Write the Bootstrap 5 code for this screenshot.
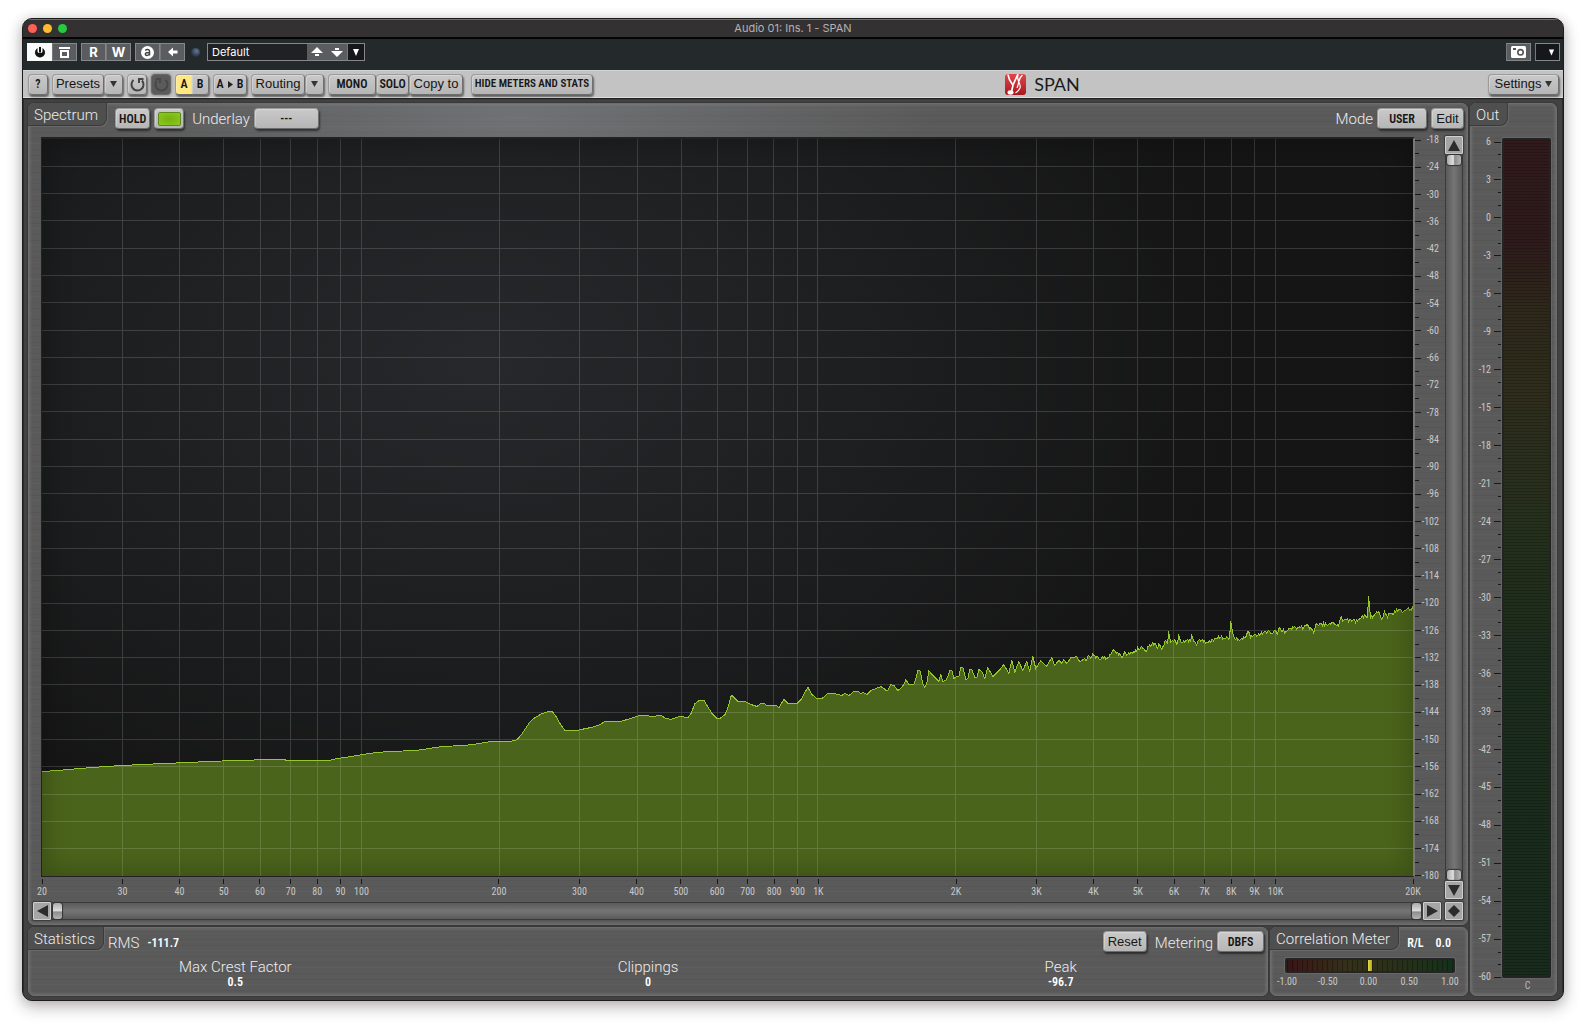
<!DOCTYPE html>
<html lang="en">
<head>
<meta charset="utf-8">
<meta name="viewport" content="width=device-width, initial-scale=1">
<title>Audio 01: Ins. 1 - SPAN</title>
<link href="https://cdn.jsdelivr.net/npm/bootstrap@5.3.0/dist/css/bootstrap.min.css" rel="stylesheet">
<style>
:root{--sans:"Liberation Sans",Arial,sans-serif;--narrow:"Roboto Condensed","Roboto",sans-serif;--light:"Roboto","Liberation Sans",sans-serif}
body{background:#fff;font-family:var(--sans);padding:18px 22px 26px;color:#e2e2e2}
svg{display:block}
.host-window{border:1px solid #1c1c1c;border-radius:10px;overflow:hidden;background:#3f3f3f;box-shadow:0 6px 16px rgba(40,25,35,.3),0 0 12px rgba(0,0,0,.12)}
.title-strip{height:20px;background:#343132;border-bottom:2px solid #050505;border-top:1px solid #6f7070;font:11px/17px "Inter",sans-serif;color:#b4b2b2}
.lights{left:5px;top:4px;gap:6px}
.lights span{width:9px;height:9px;border-radius:50%}
.l-red{background:#ff5f57}.l-amber{background:#febc2e}.l-green{background:#28c840}
.host-bar{height:31px;background:#24292c;padding:4px 3px 9px 4px}
.hbtn{width:25px;height:18px;padding:0;border:1px solid #85878a;border-radius:0;background:#5a5c60;color:#fff;font:bold 13px/16px "Inter",sans-serif;display:flex;align-items:center;justify-content:center}
.hbtn + .hbtn{border-left-color:#76787b}
.hbtn.lit{background:#fafafa;border-color:#fafafa}
.hbtn.dark{background:#15171a}
.hbtn.plain{width:20px;border-left:0;border-right:0}
.hbtn.slim{width:18px}
.hled{width:9px;height:9px;border-radius:50%;background:radial-gradient(circle at 60% 35%,#5f7896,#232d3a 75%);margin:0 7px 0 6px}
.preset-select{appearance:none;width:100px;height:18px;background:#1f2123;border:1px solid #85878a;border-right:0;border-radius:0;color:#fff;font:11px/16px "Inter",sans-serif;padding:0 4px}
.plug-bar{height:28px;background:#c3c3c3;border-top:1px solid #d4d4d4;border-bottom:1px solid #dedede;padding:3px 4px 3px 5px;box-shadow:0 1px 1px #222;position:relative;gap:4px}
.pbtn{height:21px;padding:0;border:1px solid #8a8a8a;border-color:#9b9b9b #707070 #6c6c6c #9b9b9b;border-radius:4px;background:linear-gradient(#c9c9c9,#b6b6b6);box-shadow:1px 2px 2px rgba(0,0,0,.5),inset 1px 1px 0 rgba(255,255,255,.25);color:#161616;font:13px/18px var(--sans);white-space:nowrap;display:flex;align-items:center;justify-content:center;flex:none}
.pbtn.cap{font:600 12px/18px var(--narrow)}
.pbtn.cap.long{font:600 11px/18px var(--narrow)}
.pbtn:hover{background:#d5d5d5;color:#111}
.w17{width:17px}.w19{width:19px}.w20{width:20px}.w21{width:21px}.w30{width:30px}.w33{width:33px}.w34{width:34px}.w35{width:35px}.w44{width:44px}.w47{width:47px}.w48{width:48px}.w50{width:50px}.w52{width:52px}.w54{width:54px}.w65{width:65px}.w71{width:71px}.w122{width:122px}
.pbtn.sunk{background:#5b5b5b;border-color:#6a6a6a;box-shadow:0 0 3px #666}
.pbtn.yellow{background:#ffe784}
.brand-name{font:18px/20px "Lato",sans-serif;color:#1b1b1b}
.plug-body{padding:5px 5px 4px 4px;gap:2px;background:#424242;border-left:1px solid #2e2e2e;border-right:1px solid #2e2e2e}
.stack{gap:2px}
.panel{border:1px solid #6d6d6d;border-radius:6px;box-shadow:inset 0 0 3px 1px rgba(255,255,255,.14),0 0 1px 1px #3a3a3a;background:
 repeating-linear-gradient(rgba(0,0,0,.05) 0 1px,transparent 1px 5px,rgba(255,255,255,.025) 5px 6px,transparent 6px 11px,rgba(0,0,0,.04) 11px 12px,transparent 12px 17px),#5a5a5a}
.panel.main-panel{background:
 radial-gradient(ellipse 420px 90px at 34% 14px,rgba(170,176,186,.28),transparent),
 repeating-linear-gradient(rgba(0,0,0,.05) 0 1px,transparent 1px 5px,rgba(255,255,255,.025) 5px 6px,transparent 6px 11px,rgba(0,0,0,.04) 11px 12px,transparent 12px 17px),#5a5a5a}
.ptab{height:23px;margin:-1px 0 0 -1px;padding:1px 8px 0 6px;background:#4f4f4f;border-right:1px solid #3b3b3b;border-bottom:1px solid #3b3b3b;border-radius:6px 0 8px 0;box-shadow:1px 1px 0 #686868;white-space:nowrap;align-self:flex-start}
.lite{font:300 15px/22px var(--light);color:#ececec}
.head{height:33px;padding-right:3px}
.head .pbtn{margin-top:4px}
.head .lite:not(.ptab){margin-top:4px}
.led{width:23px;height:14px;border-radius:2px;border:1px solid #5f8a16;background:radial-gradient(#76b10d,#8cc924)}
.plot-area{padding:0 4px 0 12px}
.plot{border:1px solid #222;border-top:2px solid #222;border-right:2px solid #777;border-bottom:1px solid #222;background:radial-gradient(ellipse 55% 70% at 32% 30%,#26282b,#1b1c1d 65%,#151515)}
.plot svg{position:absolute;inset:0;width:100%;height:100%}
.plot::after{content:"";position:absolute;inset:0;box-shadow:inset 0 0 26px 4px rgba(0,0,0,.22)}
.xaxis{height:22px;margin:0 2px 0 1px;position:relative}
.xaxis div{position:absolute;top:2px;width:40px;margin-left:-20px;text-align:center;font:10px/12px var(--narrow);color:#c8c8c8}
.xaxis div::before{content:"";display:block;width:1px;height:5px;background:#181818;margin:0 auto 2px}
.yaxis,.maxis{display:flex;flex-direction:column;justify-content:space-between;font:10px/12px var(--narrow);color:#c8c8c8}
.yaxis{width:24px;margin:3px 6px 23px 0}
.tick{height:0;display:flex;align-items:center;justify-content:space-between}
.tick::before{content:"";width:6px;height:1px;background:#181818}
.tick.minor::before{width:4px}
.vbar{width:18px;gap:1px;margin-top:-1px}
.track{background:linear-gradient(90deg,#5a5a5a,#757575 50%,#5a5a5a);border:1px solid #3a3a3a;border-width:0 1px}
.hbar .track{background:linear-gradient(#5a5a5a,#757575 50%,#5a5a5a);border-width:1px 0}
.grip{flex:none;height:10px;margin:0 1px;border-radius:3px;background:linear-gradient(90deg,#aaa,#e0e0e0 45%,#8c8c8c 55%,#b5b5b5);box-shadow:0 0 1px 1px #333}
.hbar .grip{height:16px;width:9px;margin:1px 1px;background:linear-gradient(#aaa,#e0e0e0 50%,#8c8c8c 55%,#b5b5b5)}
.abtn{flex:none;width:18px;height:18px;padding:0;border:1px solid #d0d0d0;border-radius:1px;background:#a5a5a5;box-shadow:0 0 1px 1px #3c3c3c;display:flex;align-items:center;justify-content:center}
.hbar{height:18px;margin:3px 4px 4px 4px;gap:1px}
.hbar .abtn:last-child{margin-left:3px}
.low{height:69px;gap:2px}
.cap-val{font:600 12px/14px var(--narrow);color:#fff}
.low .pbtn{margin-top:3px}
.stat-head{padding-right:3px}
.stat{margin-top:6px}
.stat .lite{line-height:15px}
.corr{width:198px}
.corr-meter{height:15px;margin:8px 12px 0 14px;border:2px solid #242424;border-radius:2px;box-shadow:0 0 1px 1px #6a6a6a;background:repeating-linear-gradient(90deg,rgba(0,0,0,.3) 0 1px,transparent 1px 5px),linear-gradient(90deg,#3a1416,#35301a 35%,#2d3019 60%,#16301b)}
.corr-meter i{width:4px;height:11px;background:linear-gradient(90deg,#e6dc4a,#b3a81c)}
.corr-scale{font:10px/14px var(--narrow);color:#c8c8c8;margin:2px 2px 0 1px}
.corr-scale span{width:30px;text-align:center}
.out-panel{width:87px}
.maxis{width:28px;margin:4px 0 0 3px;height:calc(100% - 4px)}
.maxis .tick{justify-content:flex-end;gap:3px}
.maxis .tick::before{order:2;width:8px}
.maxis .tick.minor::before{width:4px}
.meter{width:49px;border:2px solid #232323;border-radius:2px;box-shadow:0 0 1px 1px #666;background:repeating-linear-gradient(rgba(0,0,0,.2) 0 1px,transparent 1px 3px),linear-gradient(#311a1c,#2e1a1b 12%,#2e281b 20%,#2f2d1c 30%,#26301c 45%,#1c2c1c 62%,#182b1c)}
.mrow{margin:12px 5px 0 0}
.mfoot{font:10px/12px var(--narrow);color:#bbb;height:17px;padding:2px 5px 0 33px}
</style>
<script src="https://cdn.jsdelivr.net/npm/bootstrap@5.3.0/dist/js/bootstrap.bundle.min.js"></script>
</head>
<body class="d-flex flex-column min-vh-100">
<main class="host-window d-flex flex-column flex-grow-1">
  <header class="title-strip position-relative text-center flex-shrink-0">
    <div class="lights position-absolute d-flex"><span class="l-red"></span><span class="l-amber"></span><span class="l-green"></span></div>
    Audio 01: Ins. 1 - SPAN
  </header>

  <nav class="host-bar d-flex align-items-center flex-shrink-0" aria-label="Host controls">
    <div class="d-flex me-1">
      <button class="hbtn lit" aria-label="Bypass"><svg width="12" height="12" viewBox="0 0 12 12"><circle cx="6" cy="6.500" r="5" fill="#111"/><path d="M3.500 0h5v5.500a2.500 1.500 0 0 1-5 0z" fill="#fafafa"/><path d="M5 1h2v5.500H5z" fill="#111"/></svg></button>
      <button class="hbtn" aria-label="Output"><svg width="13" height="13" viewBox="0 0 13 13" fill="none" stroke="#fff" stroke-width="2"><path d="M1 2h11"/><rect x="3" y="5" width="7" height="6"/></svg></button>
    </div>
    <div class="d-flex me-1"><button class="hbtn">R</button><button class="hbtn">W</button></div>
    <div class="d-flex">
      <button class="hbtn" aria-label="Automation"><svg width="13" height="13" viewBox="0 0 13 13"><circle cx="6.500" cy="6.500" r="6.500" fill="#fff"/><path d="M4.300 4.400C5.200 3.400 8.500 3 8.500 5.300V9.500M8.500 6.400C6 6.300 4.200 6.700 4.300 8.200 4.500 9.900 7.500 9.800 8.500 8" fill="none" stroke="#444" stroke-width="1.500"/></svg></button>
      <button class="hbtn" aria-label="Back"><svg width="10" height="10" viewBox="0 0 10 10" fill="#fff"><path d="M0 5 5 .5V3.500h4.500v3H5v3z"/></svg></button>
    </div>
    <span class="hled"></span>
    <select class="preset-select" aria-label="Preset"><option>Default</option></select>
    <button class="hbtn plain" aria-label="Previous"><svg width="12" height="12" viewBox="0 0 12 12" fill="#fff"><path d="M0 7 6 1l6 6zM4 8h4v2H4z"/></svg></button>
    <button class="hbtn plain" aria-label="Next"><svg width="12" height="12" viewBox="0 0 12 12" fill="#fff"><path d="M0 5h12L6 11zM4 2h4v2H4z"/></svg></button>
    <button class="hbtn dark slim" aria-label="Preset list"><svg width="8" height="7" viewBox="0 0 8 7" fill="#fff"><path d="M1 0h6L4 7z"/></svg></button>
    <button class="hbtn ms-auto me-1" aria-label="Snapshot"><svg width="15" height="12" viewBox="0 0 15 12"><rect width="15" height="12" rx="1.500" fill="#fff"/><circle cx="9.500" cy="6.300" r="2.700" fill="none" stroke="#555" stroke-width="1.600"/><path d="M2 3h3" stroke="#555" stroke-width="2"/></svg></button>
    <button class="hbtn dark" aria-label="Menu"><svg class="ms-2" width="7" height="7" viewBox="0 0 8 7" fill="#fff"><path d="M1 0h6L4 7z"/></svg></button>
  </nav>

  <nav class="plug-bar d-flex align-items-center flex-shrink-0" aria-label="Plugin toolbar">
    <button class="pbtn cap w20">?</button>
    <div class="d-flex"><button class="pbtn w52">Presets</button><button class="pbtn w19" aria-label="Preset menu"><svg width="7" height="6" viewBox="0 0 8 7" fill="#333"><path d="M0 0h8L4 7z"/></svg></button></div>
    <button class="pbtn w20" aria-label="Undo"><svg width="15" height="15" viewBox="0 0 15 15" fill="none" stroke="#444" stroke-width="2"><path d="M3.500 3a6 6 0 1 0 8.500.5"/><path d="M9 6V2h4.500"/></svg></button>
    <button class="pbtn sunk w20" aria-label="Redo"><svg width="15" height="15" viewBox="0 0 15 15" fill="none" stroke="#484848" stroke-width="2"><path d="M11.500 3a6 6 0 1 1-8.500.5"/><path d="M6 6V2H1.500"/></svg></button>
    <div class="d-flex"><button class="pbtn cap yellow w17 rounded-end-0 border-end-0">A</button><button class="pbtn cap w17 rounded-start-0 border-start-0">B</button></div>
    <button class="pbtn cap w34">A<svg class="mx-1" width="5" height="7" viewBox="0 0 5 7" fill="#222"><path d="M0 0v7l5-3.500z"/></svg>B</button>
    <div class="d-flex"><button class="pbtn w54">Routing</button><button class="pbtn w19" aria-label="Routing menu"><svg width="7" height="6" viewBox="0 0 8 7" fill="#333"><path d="M0 0h8L4 7z"/></svg></button></div>
    <div class="d-flex me-1"><button class="pbtn cap w48">MONO</button><button class="pbtn cap w33">SOLO</button><button class="pbtn w54">Copy to</button></div>
    <button class="pbtn cap long w122">HIDE METERS AND STATS</button>
    <div class="d-flex align-items-center flex-grow-1 justify-content-center ps-1">
      <svg width="21" height="21" viewBox="0 0 21 21"><defs><linearGradient id="red" x2="0" y2="1"><stop stop-color="#e0454b"/><stop offset="1" stop-color="#a8181e"/></linearGradient></defs><rect width="21" height="21" rx="3" fill="url(#red)"/><path d="M3 .5c.5 4 2 7 4.500 10M13 0 8 11 6.500 18" fill="none" stroke="#fff" stroke-width="1.700"/><ellipse cx="5.500" cy="18.500" rx="3" ry="2.200" fill="#fff"/><path d="M13 1c-2 6 3.500 8 2 13-.8 2-3 4-4.500 5M17.500 1c-5 4-3 8-5.500 13" fill="none" stroke="#fff" stroke-width="1.200"/></svg>
      <span class="brand-name ms-1 ps-1">SPAN</span>
    </div>
    <button class="pbtn w71">Settings<svg class="ms-1" width="7" height="6" viewBox="0 0 8 7" fill="#333"><path d="M0 0h8L4 7z"/></svg></button>
  </nav>

  <div class="plug-body d-flex flex-grow-1">
    <div class="stack d-flex flex-column flex-grow-1">
      <section class="panel main-panel d-flex flex-column flex-grow-1">
        <div class="head d-flex align-items-start">
          <h1 class="ptab lite mb-0 me-2">Spectrum</h1>
          <button class="pbtn cap w35 me-1">HOLD</button>
          <button class="pbtn w30 me-2" aria-label="Fill spectrum"><span class="led"></span></button>
          <label class="lite me-1" for="underlay">Underlay</label>
          <button id="underlay" class="pbtn cap w65">---</button>
          <label class="lite ms-auto me-1" for="mode">Mode</label>
          <button id="mode" class="pbtn cap w50 me-1">USER</button>
          <button class="pbtn w33">Edit</button>
        </div>
        <div class="plot-area d-flex flex-grow-1">
          <div class="d-flex flex-column flex-grow-1">
            <div class="plot position-relative flex-grow-1"><svg id="plot" viewBox="41 139 1372 737" preserveAspectRatio="none"></svg></div>
            <div class="xaxis" id="xaxis"></div>
          </div>
          <div class="yaxis" id="yaxis"></div>
          <div class="vbar d-flex flex-column">
            <button class="abtn" aria-label="Up"><svg width="12" height="11" viewBox="0 0 12 11" fill="#2c2c2c"><path d="M6 0l6 11H0z"/></svg></button>
            <div class="track d-flex flex-column flex-grow-1 justify-content-between"><span class="grip"></span><span class="grip"></span></div>
            <button class="abtn" aria-label="Down"><svg width="12" height="11" viewBox="0 0 12 11" fill="#2c2c2c"><path d="M6 11l6-11H0z"/></svg></button>
          </div>
        </div>
        <div class="hbar d-flex">
          <button class="abtn" aria-label="Left"><svg width="11" height="12" viewBox="0 0 11 12" fill="#2c2c2c"><path d="M0 6l11-6v12z"/></svg></button>
          <div class="track d-flex align-items-center flex-grow-1 justify-content-between"><span class="grip"></span><span class="grip"></span></div>
          <button class="abtn" aria-label="Right"><svg width="11" height="12" viewBox="0 0 11 12" fill="#2c2c2c"><path d="M11 6L0 0v12z"/></svg></button>
          <button class="abtn" aria-label="Reset zoom"><svg width="12" height="12" viewBox="0 0 12 12" fill="#2c2c2c"><path d="M6 0l6 6-6 6-6-6z"/></svg></button>
        </div>
      </section>

      <div class="low d-flex">
        <section class="panel d-flex flex-column flex-grow-1">
          <div class="stat-head d-flex align-items-start">
            <h2 class="ptab lite mb-0 me-1">Statistics</h2>
            <span class="lite mt-1">RMS</span><span class="cap-val ms-2 mt-2">-111.7</span>
            <button class="pbtn w44 ms-auto">Reset</button>
            <label class="lite ms-2 me-1 mt-1" for="metering">Metering</label>
            <button id="metering" class="pbtn cap w47">DBFS</button>
          </div>
          <div class="row g-0 text-center stat">
            <div class="col"><div class="lite">Max Crest Factor</div><div class="cap-val">0.5</div></div>
            <div class="col"><div class="lite">Clippings</div><div class="cap-val">0</div></div>
            <div class="col"><div class="lite">Peak</div><div class="cap-val">-96.7</div></div>
          </div>
        </section>
        <section class="panel corr">
          <div class="d-flex"><h2 class="ptab lite mb-0 me-2">Correlation Meter</h2><span class="cap-val mt-2">R/L</span><span class="cap-val mt-2 ms-auto me-3">0.0</span></div>
          <div class="corr-meter d-flex justify-content-center"><i></i></div>
          <div class="corr-scale d-flex justify-content-between"><span>-1.00</span><span>-0.50</span><span>0.00</span><span>0.50</span><span>1.00</span></div>
        </section>
      </div>
    </div>

    <section class="panel out-panel d-flex flex-column">
      <div class="d-flex"><h2 class="ptab lite mb-0">Out</h2></div>
      <div class="mrow d-flex flex-grow-1 justify-content-between">
        <div><div class="maxis" id="maxis"></div></div>
        <div class="meter"></div>
      </div>
      <div class="mfoot text-center">C</div>
    </section>
  </div>
</main>

<script>
// Spectrum trace, one x,y pair per vertex in plot units
const trace = `41,771 56,770 67,769 78,768 91,767 105,766 121,765 140,764 163,763 186,762 207,761 234,760 272,759 296,760 328,760 336,758 350,756 362,754 375,752 389,751 414,750 428,748 441,746 462,745 472,744 484,742 490,741 500,741 507,741 514,740 517,738 521,733 529,721 534,717 541,713 548,711 551,711 555,716 560,725 564,730 576,730 580,729 590,727 597,725 604,721 619,721 630,718 638,715 645,715 650,716 660,715 665,718 670,719 678,716 687,717 690,713 694,703 698,700 703,700 706,705 711,713 716,718 719,718 724,714 727,707 730,696 731,695 737,701 744,701 750,704 756,706 760,703 763,703 766,705 775,705 778,707 783,699 787,703 796,703 801,698 805,690 807,687 811,694 816,698 821,698 827,693 833,693 841,695 844,693 848,695 853,691 857,691 860,693 862,692 866,694 870,690 880,686 883,688 885,690 887,690 890,684 893,685 897,690 900,688 903,684 905,679 908,684 913,684 915,678 917,670 919,670 920,674 922,683 924,687 926,682 928,670 931,674 934,677 938,681 940,674 942,681 945,680 947,676 949,670 951,670 953,678 956,676 958,676 960,667 962,667 965,679 967,678 969,669 971,669 974,677 976,677 978,669 981,671 984,678 987,667 992,676 997,671 1000,668 1003,664 1008,673 1011,660 1014,672 1018,661 1022,670 1026,661 1029,671 1032,656 1035,668 1040,660 1046,666 1051,657 1054,665 1058,660 1061,663 1063,659 1066,663 1070,657 1076,656 1079,661 1083,659 1093,655 1100,659 1107,657 1112,650 1117,652 1121,657 1124,651 1127,654 1133,651 1140,647 1145,651 1148,646 1154,643 1157,648 1158,643 1161,649 1165,640 1167,643 1168,631 1170,642 1173,641 1177,643 1178,634 1181,642 1187,639 1190,641 1191,635 1193,641 1196,645 1198,640 1210,642 1212,639 1220,637 1229,637 1230,621 1232,633 1235,639 1245,637 1247,631 1250,637 1257,635 1263,632 1267,631 1270,633 1275,630 1277,634 1279,627 1282,631 1287,630 1293,627 1298,627 1308,626 1313,632 1316,623 1320,623 1327,625 1333,622 1338,626 1340,617 1343,620 1350,619 1357,621 1360,618 1365,615 1367,617 1368,596 1370,618 1375,613 1379,613 1381,619 1384,611 1387,617 1389,613 1395,612 1396,609 1403,611 1407,608 1410,609 1413,608`.split(' ').map(p => p.split(',').map(Number));
const pts = [];
let seed = 7;
trace.forEach(([x, y], i) => {
  const next = trace[i + 1];
  pts.push([x, y]);
  if (!next || x < 1035) return;
  // the upper bins carry a fine ripple between the main vertices
  for (let s = x + 1; s < next[0] - 0.5; s += 1) {
    seed = (seed * 73 + 41) % 1009;
    pts.push([s, y + (next[1] - y) * (s - x) / (next[0] - x) + (seed / 1009 - 0.5) * (x < 1080 ? 1 : 4)]);
  }
});
const line = pts.map(p => (p[0] + 0.5).toFixed(1) + ',' + (p[1] + 0.5).toFixed(1)).join(' ');
const freqs = [20,30,40,50,60,70,80,90,100,200,300,400,500,600,700,800,900,1000,2000,3000,4000,5000,6000,7000,8000,9000,10000,20000];
const fx = f => Math.log10(f / 20) / 3;
let grid = '';
for (let i = 1; i < 27; i++) { const y = Math.floor(139 + i * 737 / 27) + 0.5; grid += `M41 ${y}H1413`; }
freqs.slice(1, -1).forEach(f => { const x = Math.floor(41 + fx(f) * 1372) + 0.5; grid += `M${x} 139V876`; });
document.getElementById('plot').innerHTML =
  `<polygon points="41,876 41,771 ${line} 1413,876" fill="#4b641b"/>` +
  `<path d="${grid}" stroke="#fff" stroke-opacity=".15" fill="none" shape-rendering="crispEdges" vector-effect="non-scaling-stroke"/>` +
  `<polyline points="${line}" fill="none" stroke="#94c62d" stroke-width="1" shape-rendering="crispEdges" vector-effect="non-scaling-stroke"/>`;
document.getElementById('xaxis').innerHTML = freqs.map(f =>
  `<div style="left:${(fx(f) * 100).toFixed(2)}%">${f >= 1000 ? f / 1000 + 'K' : f}</div>`).join('');
let ys = '';
for (let d = -18; d >= -180; d -= 3) ys += d % 6 ? '<div class="tick minor"></div>' : `<div class="tick">${d}</div>`;
document.getElementById('yaxis').innerHTML = ys;
let ms = '';
for (let d = 6; d >= -60; d--) ms += d % 3 ? '<div class="tick minor"></div>' : `<div class="tick">${d}</div>`;
document.getElementById('maxis').innerHTML = ms;
</script>
</body>
</html>
